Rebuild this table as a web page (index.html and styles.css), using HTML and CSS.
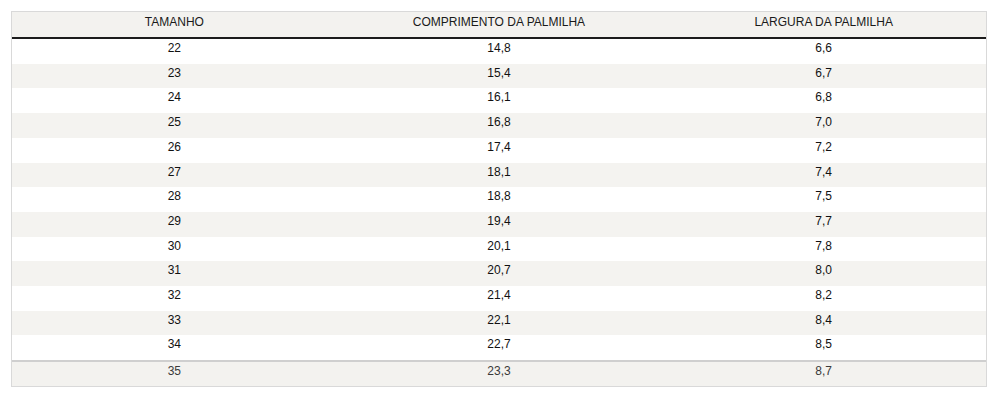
FILE: index.html
```html
<!DOCTYPE html>
<html lang="pt">
<head>
<meta charset="utf-8">
<title>Tabela de medidas</title>
<link rel="stylesheet" href="styles.css">
</head>
<body>
<div class="wrap">
<table class="sizes">
<thead>
<tr><th>TAMANHO</th><th>COMPRIMENTO DA PALMILHA</th><th>LARGURA DA PALMILHA</th></tr>
</thead>
<tbody>
<tr><td>22</td><td>14,8</td><td>6,6</td></tr>
<tr><td>23</td><td>15,4</td><td>6,7</td></tr>
<tr><td>24</td><td>16,1</td><td>6,8</td></tr>
<tr><td>25</td><td>16,8</td><td>7,0</td></tr>
<tr><td>26</td><td>17,4</td><td>7,2</td></tr>
<tr><td>27</td><td>18,1</td><td>7,4</td></tr>
<tr><td>28</td><td>18,8</td><td>7,5</td></tr>
<tr><td>29</td><td>19,4</td><td>7,7</td></tr>
<tr><td>30</td><td>20,1</td><td>7,8</td></tr>
<tr><td>31</td><td>20,7</td><td>8,0</td></tr>
<tr><td>32</td><td>21,4</td><td>8,2</td></tr>
<tr><td>33</td><td>22,1</td><td>8,4</td></tr>
<tr><td>34</td><td>22,7</td><td>8,5</td></tr>
</tbody>
<tfoot>
<tr><td>35</td><td>23,3</td><td>8,7</td></tr>
</tfoot>
</table>
</div>
</body>
</html>
```

FILE: styles.css
```css
html, body {
  margin: 0;
  padding: 0;
  background: #ffffff;
}

.wrap {
  padding: 11px;
}

.sizes {
  width: 976px;
  table-layout: fixed;
  border-collapse: separate;
  border-spacing: 0;
  border: 1px solid #d9d9d9;
  font-family: "Liberation Sans", Arial, sans-serif;
  font-size: 12px;
  color: #111111;
}

.sizes th,
.sizes td {
  text-align: center;
  font-weight: normal;
  padding: 1px 10px 6px;
  line-height: 17.7px;
}

.sizes thead th {
  background: #f3f2ef;
  color: #1a1a1a;
  line-height: 18px;
  border-bottom: 2px solid #1c1c1c;
}

.sizes tbody tr:nth-child(even) td {
  background: #f4f3f0;
}

.sizes tfoot td {
  background: #f3f2ef;
  color: #3a3a3a;
  padding: 0 10px 6px;
  line-height: 18px;
  border-top: 2px solid #cfcfcf;
}
```
